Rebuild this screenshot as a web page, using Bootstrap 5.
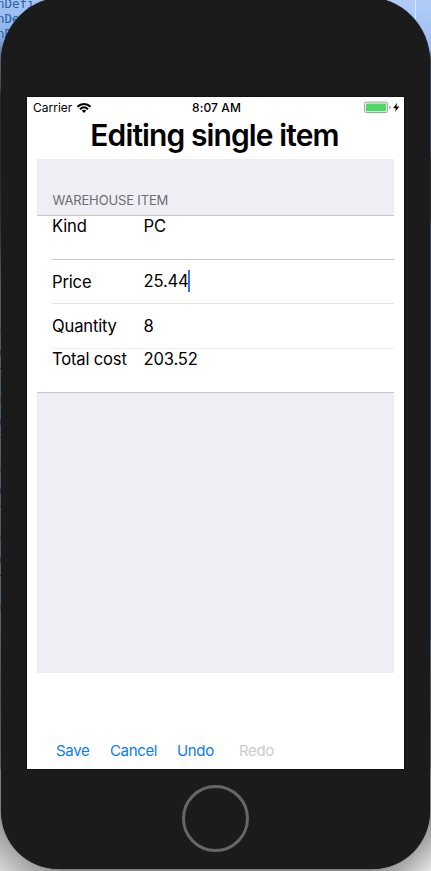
<!DOCTYPE html>
<html lang="en">
<head>
<meta charset="utf-8">
<meta name="viewport" content="width=device-width, initial-scale=1">
<title>Editing single item</title>
<link href="https://cdn.jsdelivr.net/npm/bootstrap@5.3.0/dist/css/bootstrap.min.css" rel="stylesheet">
<style>
body{font-family:Inter,"Liberation Sans",sans-serif;color:#000;height:871px;line-height:1;
background:linear-gradient(#888,#888) 0 769px/100% 102px no-repeat,linear-gradient(#a5c5f5 0,#8db3ec 35px,#536a80 60px,#48545d 85px,#282828 97px,#303030 218px,#536673 290px,#576c7c 630px,#59595a 690px,#666 769px)}
.desktop{height:871px;background:linear-gradient(45deg,#d8d8d8,#aaa 24px,#0000 50px) 0 811px/60px 60px no-repeat,linear-gradient(-45deg,#e8e8e8,#aaa 24px,#0000 50px) 371px 811px/60px 60px no-repeat,linear-gradient(#b2cdf7,#9bbdf0 50px,#36425a 60px) 371px 0/60px 159px no-repeat,linear-gradient(#332d2a,#332d2a) 429px 159px/2px 60px no-repeat,linear-gradient(#36425a,#36425a) 429px 220px/2px 420px no-repeat,repeating-linear-gradient(#0000 0 28px,#6b4a42 28px 34px,#0000 34px 50px,#353c70 50px 56px,#0000 56px 68px,#30343a 68px 69px) 0 300px/2px 310px no-repeat}
.code{font:12.5px/15px "DejaVu Sans Mono",monospace;color:#2e5ea6;left:-3px;top:-4px;white-space:pre}
.edge{left:415px;top:0;width:1px;height:20px;background:#d9e7fc}
.phone{width:429px;height:872px;margin-left:1px;top:-3px;padding:100px 26px 0;background:#1b1b1b;border-radius:64px 64px 57px 57px/64px 64px 58px 58px;box-shadow:0 0 1px #222}
.screen{width:377px;height:672px;background:#fff;box-shadow:0 0 0 1px #111;padding:0 10px}
.status{height:20px;margin:0 -10px;padding:1px 4px 0 6px;font-size:12px}
.status>div{flex:1 1 0}
.clock{font-weight:500;letter-spacing:.1px}
.title{font-size:30px;font-weight:600;line-height:37px;height:42px;letter-spacing:-.9px;margin:0;padding-right:2px;white-space:nowrap}
.form-area{height:514px;background:#efeef4}
.heading{height:57px;padding:33px 0 0 15.5px;font-size:13px;line-height:16px;letter-spacing:-.15px;color:#6d6d72;border-bottom:1px solid #c8c7cc}
.rows{background:#fff;padding-left:15px;border-bottom:1px solid #c8c7cc;font-size:16.6px;line-height:20px;letter-spacing:-.18px}
.line{border-bottom:1px solid #c8c7cc;height:44px}
.line>span:first-child{width:91.5px;flex:none}
.caret{display:inline-block;width:2px;height:22px;background:#3d6df0;vertical-align:-5px;margin:-8px 0 0 -1px}
.faint{border-color:#e4e4e6}.faint2{border-color:#eeeef0;height:45px;padding-bottom:1px}
.last{height:43px;border:0}
.actions{height:96px;padding:69px 0 0 19px}
.act{border:0;background:none;padding:0;height:18px;color:#0a7aff;font-size:15px;line-height:18px;text-align:left;letter-spacing:-.35px}
.act:disabled{color:#ccc}
.home{width:67px;height:67px;border:3px solid #666;margin:16px auto 0 155px}
</style>
</head>
<body>
<main class="desktop position-relative overflow-hidden">
<div class="code position-absolute">nDefi
nDe
nD</div>
<div class="edge position-absolute"></div>
<div class="phone position-relative">
 <section class="screen">
  <div class="status d-flex align-items-center">
   <div class="d-flex align-items-center"><span>Carrier</span>
    <svg class="ms-1" width="16" height="12" viewBox="0 0 16 12" fill="none" stroke="#000" stroke-width="2"><path d="M1.4 4.8C5.2 1 10.8 1 14.6 4.8M4 7.2c2.4-2.3 5.6-2.3 8 0"/><path d="M5.7 8.6c1.4-1.2 3.2-1.2 4.6 0L8 11z" fill="#000" stroke="none"/></svg></div>
   <span class="clock">8:07 AM</span>
   <div class="d-flex justify-content-end align-items-center">
    <svg width="36" height="13" viewBox="0 0 36 13"><rect x=".6" y="1.1" width="23" height="10.5" rx="2" fill="#fff" stroke="#999"/><rect x="2" y="2.6" width="20.2" height="7.6" rx=".6" fill="#4cd964"/><path d="M25.3 4.7q1.4.2 1.4 1.8t-1.4 1.8z" fill="#999"/><path d="M33.1 1.8 29.1 7.2h2.8L31.1 11l4.2-5.5h-2.9z"/></svg></div>
  </div>
  <h1 class="title text-center"><span>Editing single item</span></h1>
  <div class="form-area">
   <div class="heading"><span>WAREHOUSE ITEM</span></div>
   <div class="rows">
    <div class="line d-flex"><span>Kind</span><span>PC</span></div>
    <div class="line faint d-flex align-items-center"><span>Price</span><span>25.44<i class="caret"></i></span></div>
    <div class="line faint2 d-flex align-items-center"><span>Quantity</span><span>8</span></div>
    <div class="line last d-flex"><span>Total cost</span><span>203.52</span></div>
   </div>
  </div>
  <div class="actions d-flex">
   <button class="act" style="width:54px">Save</button><button class="act" style="width:67px">Cancel</button><button class="act" style="width:62px">Undo</button><button class="act" disabled>Redo</button>
  </div>
 </section>
 <div class="home rounded-circle"></div>
</div>
</main>
<script src="https://cdn.jsdelivr.net/npm/bootstrap@5.3.0/dist/js/bootstrap.bundle.min.js"></script>
</body>
</html>
